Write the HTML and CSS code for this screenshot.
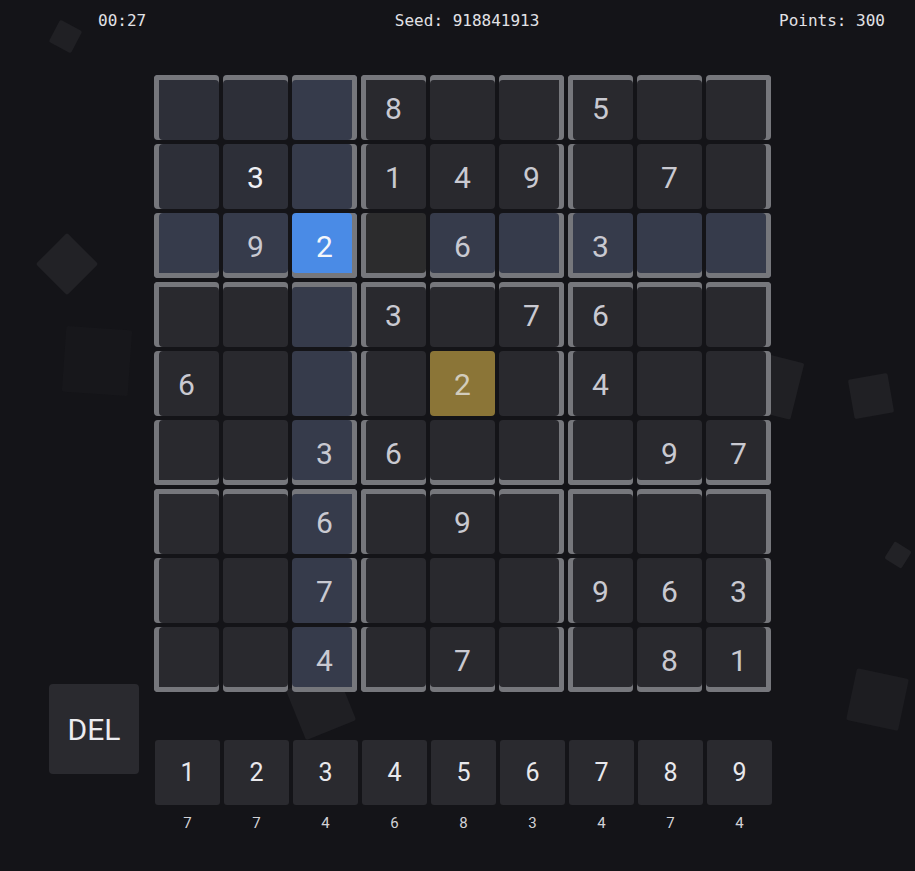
FILE: index.html
```html
<!DOCTYPE html>
<html>
<head>
<meta charset="utf-8">
<link rel="stylesheet" href="styles.css">
</head>
<body>
<div class="shapes" aria-hidden="true">
  <span class="sq s1"></span>
  <span class="sq s2"></span>
  <span class="sq s3"></span>
  <span class="sq s4"></span>
  <span class="sq s5"></span>
  <span class="sq s6"></span>
  <span class="sq s7"></span>
  <span class="sq s8"></span>
</div>
<header class="topbar">
  <span>00:27</span>
  <span class="seed">Seed: 918841913</span>
  <span>Points: 300</span>
</header>
<main class="game">
  <div class="board">
    <div class="c bt bl hb"></div><div class="c bt hb"></div><div class="c bt br hl"></div><div class="c bt bl">8</div><div class="c bt"></div><div class="c bt br"></div><div class="c bt bl">5</div><div class="c bt"></div><div class="c bt br"></div>
    <div class="c bl hb"></div><div class="c hb user">3</div><div class="c br hl"></div><div class="c bl">1</div><div class="c">4</div><div class="c br">9</div><div class="c bl"></div><div class="c">7</div><div class="c br"></div>
    <div class="c bb bl hl"></div><div class="c bb hl">9</div><div class="c bb br sel">2</div><div class="c bb bl hov"></div><div class="c bb hl">6</div><div class="c bb br hl"></div><div class="c bb bl hl">3</div><div class="c bb hl"></div><div class="c bb br hl"></div>
    <div class="c bt bl"></div><div class="c bt"></div><div class="c bt br hl"></div><div class="c bt bl">3</div><div class="c bt"></div><div class="c bt br">7</div><div class="c bt bl">6</div><div class="c bt"></div><div class="c bt br"></div>
    <div class="c bl">6</div><div class="c"></div><div class="c br hl"></div><div class="c bl"></div><div class="c same">2</div><div class="c br"></div><div class="c bl">4</div><div class="c"></div><div class="c br"></div>
    <div class="c bb bl"></div><div class="c bb"></div><div class="c bb br hl">3</div><div class="c bb bl">6</div><div class="c bb"></div><div class="c bb br"></div><div class="c bb bl"></div><div class="c bb">9</div><div class="c bb br">7</div>
    <div class="c bt bl"></div><div class="c bt"></div><div class="c bt br hl">6</div><div class="c bt bl"></div><div class="c bt">9</div><div class="c bt br"></div><div class="c bt bl"></div><div class="c bt"></div><div class="c bt br"></div>
    <div class="c bl"></div><div class="c"></div><div class="c br hl">7</div><div class="c bl"></div><div class="c"></div><div class="c br"></div><div class="c bl">9</div><div class="c">6</div><div class="c br">3</div>
    <div class="c bb bl"></div><div class="c bb"></div><div class="c bb br hl">4</div><div class="c bb bl"></div><div class="c bb">7</div><div class="c bb br"></div><div class="c bb bl"></div><div class="c bb">8</div><div class="c bb br">1</div>
  </div>
  <button class="del">DEL</button>
  <div class="pad">
    <div class="key"><button class="num">1</button><span class="left">7</span></div>
    <div class="key"><button class="num">2</button><span class="left">7</span></div>
    <div class="key"><button class="num">3</button><span class="left">4</span></div>
    <div class="key"><button class="num">4</button><span class="left">6</span></div>
    <div class="key"><button class="num">5</button><span class="left">8</span></div>
    <div class="key"><button class="num">6</button><span class="left">3</span></div>
    <div class="key"><button class="num">7</button><span class="left">4</span></div>
    <div class="key"><button class="num">8</button><span class="left">7</span></div>
    <div class="key"><button class="num">9</button><span class="left">4</span></div>
  </div>
</main>
</body>
</html>
```
FILE: styles.css
```css
html, body {
  margin: 0;
  padding: 0;
}
body {
  background: #141418;
  color: #e6e6ea;
  font-family: Roboto, "Noto Sans", sans-serif;
  width: 915px;
  height: 871px;
  overflow: hidden;
  position: relative;
}

/* decorative floating squares */
.shapes {
  position: absolute;
  inset: 0;
  z-index: 0;
  pointer-events: none;
}
.sq {
  position: absolute;
  display: block;
  background: #222226;
  border-radius: 2px;
}
.s1 { left: 53px; top: 24px; width: 25px; height: 25px; transform: rotate(28deg); background: #202024; }
.s2 { left: 45px; top: 242px; width: 44px; height: 44px; transform: rotate(45deg); }
.s3 { left: 64px; top: 328px; width: 66px; height: 66px; transform: rotate(4deg); background: #17171b; }
.s4 { left: 752px; top: 357px; width: 46px; height: 58px; transform: rotate(14deg); background: #202024; }
.s5 { left: 851px; top: 376px; width: 40px; height: 40px; transform: rotate(-10deg); background: #202024; }
.s6 { left: 888px; top: 545px; width: 20px; height: 20px; transform: rotate(32deg); background: #222226; }
.s7 { left: 851px; top: 673px; width: 53px; height: 53px; transform: rotate(12deg); background: #1d1d21; }
.s8 { left: 294px; top: 678px; width: 54px; height: 54px; transform: rotate(-22deg); background: #1f1f23; }

.topbar {
  position: relative;
  z-index: 1;
  height: 40px;
  display: flex;
  align-items: center;
  justify-content: space-between;
  padding: 0 30px 0 98px;
  font-family: "DejaVu Sans Mono", "Liberation Mono", monospace;
  font-size: 16px;
  color: #e2e2e6;
}
.seed {
  margin-left: 9px;
}

.game {
  position: relative;
  z-index: 1;
  padding: 35px 0 0 154px;
}

.board {
  display: grid;
  grid-template-columns: repeat(9, 65px);
  grid-auto-rows: 65px;
  gap: 4px;
  width: max-content;
}

.c {
  --st: 0px;
  --sl: 0px;
  --sr: 0px;
  --sb: 0px;
  --bc: #76777c;
  background: #29292e;
  border-radius: 4px;
  box-shadow:
    inset 0 var(--st) 0 var(--bc),
    inset var(--sl) 0 0 var(--bc),
    inset calc(-1 * var(--sr)) 0 0 var(--bc),
    inset 0 calc(-1 * var(--sb)) 0 var(--bc);
  display: flex;
  align-items: center;
  justify-content: center;
  padding-top: 2px;
  box-sizing: border-box;
  font-size: 30px;
  color: #c9c9d1;
  line-height: 1;
}
.bt { --st: 5px; }
.bb { --sb: 5px; }
.bl { --sl: 5px; }
.br { --sr: 5px; }

.hb { background: #2d2f38; }
.hl { background: #363b4b; }
.hov { background: #2c2c2d; }
.sel { background: #4a8be6; color: #f4f6fa; }
.same { background: #8b7537; color: #d2ccbc; }
.user { color: #f0f0f4; }

.del {
  position: absolute;
  left: 49px;
  top: 644px;
  width: 90px;
  height: 90px;
  border: none;
  border-radius: 4px;
  background: #2a2a2f;
  color: #ececf0;
  font-family: Roboto, "Noto Sans", sans-serif;
  font-size: 30px;
  padding: 0;
}

.pad {
  display: grid;
  grid-template-columns: repeat(9, 65px);
  gap: 4px;
  margin-top: 48px;
  margin-left: 1px;
  width: max-content;
}
.key {
  display: flex;
  flex-direction: column;
  align-items: center;
}
.num {
  width: 65px;
  height: 65px;
  border: none;
  border-radius: 3px;
  background: #2a2a2f;
  color: #e8e8ec;
  font-family: Roboto, "Noto Sans", sans-serif;
  font-size: 25px;
  padding: 0;
}
.left {
  margin-top: 9px;
  font-size: 15px;
  color: #d2d2d6;
}
```
